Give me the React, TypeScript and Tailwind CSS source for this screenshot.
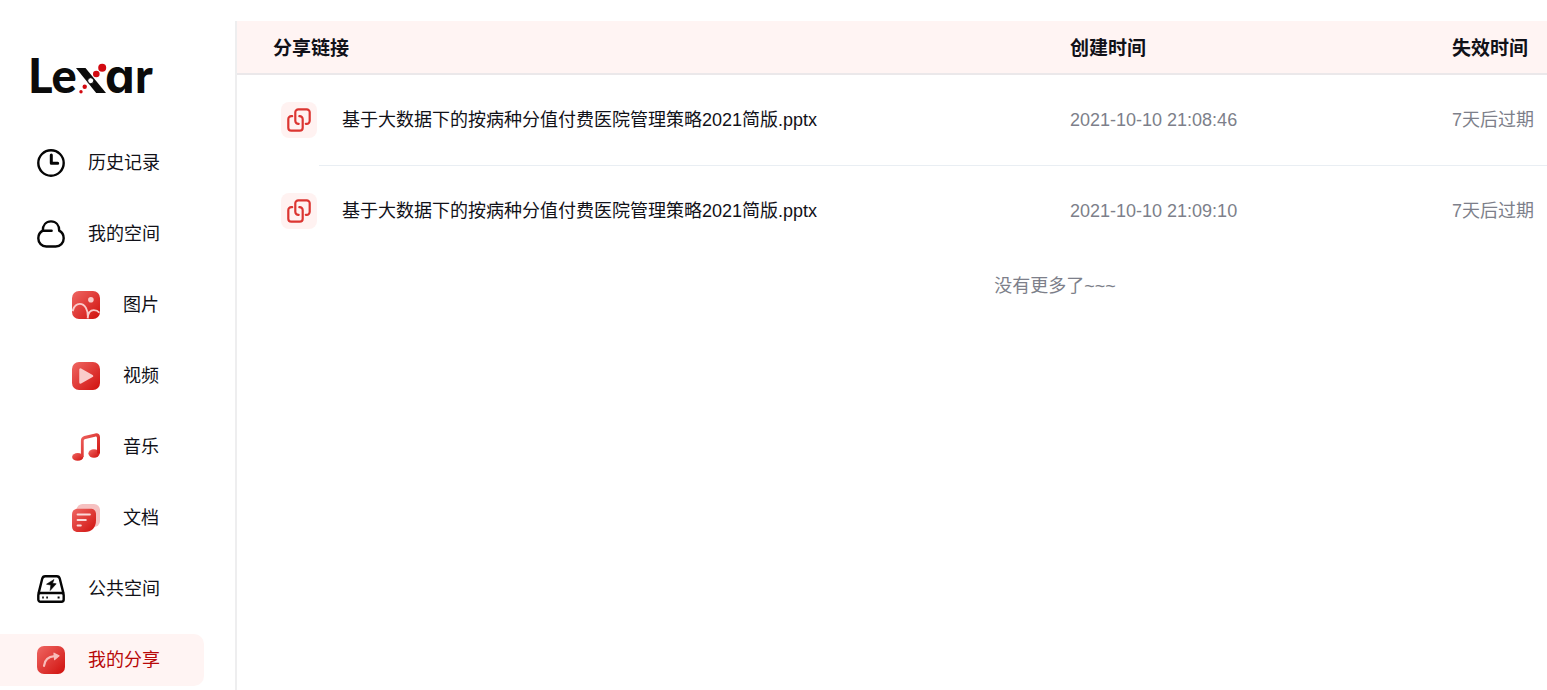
import React, { useState } from 'react';

interface NavItem {
  id: string;
  label: string;
  icon: React.FC;
  nested?: boolean;
}

interface ShareRecord {
  id: number;
  title: string;
  createdAt: string;
  expires: string;
}

// Shared red gradient for the filled icons
const RedGradient: React.FC<{ id: string }> = ({ id }) => (
  <defs>
    <linearGradient id={id} x1="0" y1="0" x2="1" y2="1">
      <stop offset="0" stopColor="#ef6763" />
      <stop offset="1" stopColor="#d0100d" />
    </linearGradient>
  </defs>
);

const HistoryIcon: React.FC = () => (
  <svg className="size-7 shrink-0" viewBox="0 0 28 28" fill="none" stroke="#050505" aria-hidden="true">
    <circle cx="14" cy="14" r="12.7" strokeWidth="2.4" />
    <path d="M14.3 6v8.2h6.4" strokeWidth="3" strokeLinecap="round" strokeLinejoin="round" />
  </svg>
);

const CloudIcon: React.FC = () => (
  <svg className="size-7 shrink-0" viewBox="0 0 28 28" fill="none" stroke="#050505" strokeWidth="2.4" strokeLinecap="round" aria-hidden="true">
    <path d="M5.8 10.6C5.8 5.2 9 1.4 14 1.4s8.2 3.8 8.2 9.2c3 1.6 4.5 4.3 4.5 7.6 0 4.8-3.4 8.3-8 8.3H9.3c-4.6 0-8-3.5-8-8.3 0-3.3 1.5-6 4.5-7.6Z" />
    <path d="M6 10.8h8.6" />
  </svg>
);

const PictureIcon: React.FC = () => (
  <svg className="size-7 shrink-0" viewBox="0 0 28 28" fill="none" aria-hidden="true">
    <RedGradient id="picture-red" />
    <rect width="28" height="28" rx="7" fill="url(#picture-red)" />
    <circle cx="18.9" cy="8.7" r="2.8" fill="#f9cbca" />
    <path d="M.6 20.2C1.8 15.5 4.3 12.9 7.8 12.9c5 0 8.6 5.8 8 14.500M15.6 27.4c.4-5 2.8-8.3 6.2-8.3 2.3 0 4.2.8 5.6 2.7" stroke="#f9cbca" strokeWidth="1.9" />
  </svg>
);

const VideoIcon: React.FC = () => (
  <svg className="size-7 shrink-0" viewBox="0 0 28 28" aria-hidden="true">
    <RedGradient id="video-red" />
    <rect width="28" height="28" rx="7" fill="url(#video-red)" />
    <path d="M8.5 7.5v13L20 14Z" fill="#facccb" stroke="#facccb" strokeWidth="2.5" strokeLinejoin="round" />
  </svg>
);

const MusicIcon: React.FC = () => (
  <svg className="size-7 shrink-0" viewBox="0 0 28 28" aria-hidden="true">
    <RedGradient id="music-red" />
    <g fill="url(#music-red)">
      <ellipse cx="5.7" cy="23.9" rx="5.6" ry="3.9" />
      <ellipse cx="22" cy="20.5" rx="5.6" ry="4.2" />
      <path d="M8.9 24V7.7c0-2.4 1.2-4 3.4-4.6L23.3.4C26-.2 28 1.3 28 4v16.5h-3V5.3c0-1.4-.7-1.9-2-1.6L13.4 6c-1.2.3-1.7.9-1.7 2.1V24Z" />
    </g>
  </svg>
);

const DocumentIcon: React.FC = () => (
  <svg className="size-7 shrink-0" viewBox="0 0 28 28" aria-hidden="true">
    <RedGradient id="document-red" />
    <rect x="4.5" width="23.5" height="23" rx="6" fill="#f6c1c1" />
    <path d="M6 4.8h12.5c3.5 0 5.5 2 5.5 5.5v6.2C24 23.5 19.5 28 13 28H6c-4 0-6-2.2-6-6V10.800c0-3.8 2-6 6-6Z" fill="url(#document-red)" />
    <path d="M5.6 10.5h12.3M5.6 16h8.2M5.6 21.4h3.2" stroke="#fbdada" strokeWidth="2" strokeLinecap="round" />
  </svg>
);

const DriveIcon: React.FC = () => (
  <svg className="size-7 shrink-0" viewBox="0 0 28 28" fill="none" stroke="#050505" strokeWidth="2.4" strokeLinejoin="round" aria-hidden="true">
    <path d="M1.5 18.6 5.2 3.8C5.6 2.2 6.6 1.3 8.2 1.3h11.600c1.6 0 2.6.9 3 2.500l3.7 14.8" />
    <rect x="1.3" y="18" width="25.4" height="8.7" rx="2.2" />
    <path d="m17 4.5-7.5 4.700 4.300.9-.6 5.400 6-6.700-3.700-.6Z" fill="#050505" stroke="#050505" strokeWidth=".6" />
    <path d="M5.2 22.4h1.6M9.3 22.4h1.6M20.6 22.4h2" strokeWidth="2" />
  </svg>
);

const ShareIcon: React.FC = () => (
  <svg className="size-7 shrink-0" viewBox="0 0 28 28" fill="none" aria-hidden="true">
    <RedGradient id="share-red" />
    <rect width="28" height="28" rx="7" fill="url(#share-red)" />
    <path d="M7 19.8c.6-5.6 4-9 10.5-9.6" stroke="#f8bcb9" strokeWidth="2.2" strokeLinecap="round" />
    <path d="m17 7.2 5 2.7-4.4 3.6Z" fill="#f8bcb9" stroke="#f8bcb9" strokeWidth="1.2" strokeLinejoin="round" />
  </svg>
);

const LinkBadge: React.FC = () => (
  <span className="flex size-9 items-center justify-center rounded-lg bg-[#fff2f1]">
    <svg className="size-6" viewBox="0 0 24 24" fill="none" stroke="#dc3531" strokeWidth="2.2" strokeLinecap="round" aria-hidden="true">
      <path d="M18.8 15.8h.9a3 3 0 0 0 3-3V4.300a3 3 0 0 0-3-3h-8.400a3 3 0 0 0-3 3v8.500a3 3 0 0 0 3.400 3" />
      <path d="M5.2 8.200h-.9a3 3 0 0 0-3 3v8.500a3 3 0 0 0 3 3h8.400a3 3 0 0 0 3-3v-8.500a3 3 0 0 0-3.400-3" />
    </svg>
  </span>
);

const Logo: React.FC = () => (
  <svg className="h-16 w-36" viewBox="0 0 144 64" role="img" aria-label="Lexar">
    <g fill="#0b0b0b" fontWeight="900" fontSize="47">
      <text x="4" y="48" fontFamily="Lato, sans-serif">Le</text>
      <text x="81" y="48" fontFamily="Inter, sans-serif" fontWeight="700" className="[font-feature-settings:'cv11']">a</text>
      <text x="111" y="48" fontFamily="Lato, sans-serif">r</text>
    </g>
    {/* the x is a black stroke crossed by a row of red dots */}
    <path d="M52 23h9.5L82 48h-9.8Z" fill="#0b0b0b" />
    <circle cx="66.7" cy="35.7" r="3" fill="#fff" stroke="#0b0b0b" strokeWidth="1" />
    <g fill="#d20a11">
      <circle cx="78.2" cy="22.7" r="4" />
      <circle cx="72.3" cy="29" r="3.3" />
      <circle cx="60.7" cy="41.7" r="2.2" />
      <circle cx="57" cy="46.7" r="1.7" />
    </g>
  </svg>
);

const navItems: NavItem[] = [
  { id: 'history', label: '历史记录', icon: HistoryIcon },
  { id: 'space', label: '我的空间', icon: CloudIcon },
  { id: 'pictures', label: '图片', icon: PictureIcon, nested: true },
  { id: 'videos', label: '视频', icon: VideoIcon, nested: true },
  { id: 'music', label: '音乐', icon: MusicIcon, nested: true },
  { id: 'documents', label: '文档', icon: DocumentIcon, nested: true },
  { id: 'public', label: '公共空间', icon: DriveIcon },
  { id: 'shares', label: '我的分享', icon: ShareIcon },
];

const shareRecords: ShareRecord[] = [
  {
    id: 1,
    title: '基于大数据下的按病种分值付费医院管理策略2021简版.pptx',
    createdAt: '2021-10-10 21:08:46',
    expires: '7天后过期',
  },
  {
    id: 2,
    title: '基于大数据下的按病种分值付费医院管理策略2021简版.pptx',
    createdAt: '2021-10-10 21:09:10',
    expires: '7天后过期',
  },
];

const App: React.FC = () => {
  const [active, setActive] = useState('shares');

  return (
    <div className="flex min-h-screen overflow-hidden bg-white pt-[21px] font-['Liberation_Sans','Noto_Sans_CJK_SC',sans-serif] text-lg text-[#111118]">
      <aside className="w-[235px] shrink-0">
        <div className="pt-6 pl-6">
          <Logo />
        </div>
        <nav className="mt-7 flex flex-col gap-[19px]">
          {navItems.map(({ id, label, icon: Icon, nested }) => (
            <a
              key={id}
              href={`#${id}`}
              onClick={() => setActive(id)}
              className={`mr-[31px] flex h-[52px] items-center gap-[23px] rounded-r-[10px] ${
                nested ? 'pl-[72px]' : 'pl-[37px]'
              } ${active === id ? 'bg-[#fff4f3] text-[#b80808]' : 'hover:bg-[#fff4f3]'}`}
            >
              <Icon />
              <span>{label}</span>
            </a>
          ))}
        </nav>
      </aside>

      <main className="min-w-0 flex-1 border-l-2 border-[#eeeeef]">
        <table className="w-full table-fixed whitespace-nowrap text-left">
          <colgroup>
            <col className="w-[82px]" />
            <col />
            <col className="w-[382px]" />
            <col className="w-[95px]" />
          </colgroup>
          <thead className="bg-[#fff4f3] text-[19px]">
            <tr className="h-[53px] border-b-2 border-[#ebe8ea]">
              <th colSpan={2} className="pt-1 pl-9 font-bold">分享链接</th>
              <th className="pt-1 font-bold">创建时间</th>
              <th className="pt-1 font-bold">失效时间</th>
            </tr>
          </thead>
          <tbody>
            {shareRecords.map((record, index) => {
              const divider = index < shareRecords.length - 1 ? 'border-b border-[#e9eef3]' : '';
              return (
                <tr key={record.id} className="h-[91px]">
                  <td className="pl-11">
                    <LinkBadge />
                  </td>
                  <td className={`pl-[23px] ${divider}`}>{record.title}</td>
                  <td className={`text-[#7d7f8a] ${divider}`}>{record.createdAt}</td>
                  <td className={`text-[#7d7f8a] ${divider}`}>{record.expires}</td>
                </tr>
              );
            })}
          </tbody>
        </table>
        <p className="mt-4 pl-[326px] text-center text-[#7d7f8a]">没有更多了~~~</p>
      </main>
    </div>
  );
};

export default App;
